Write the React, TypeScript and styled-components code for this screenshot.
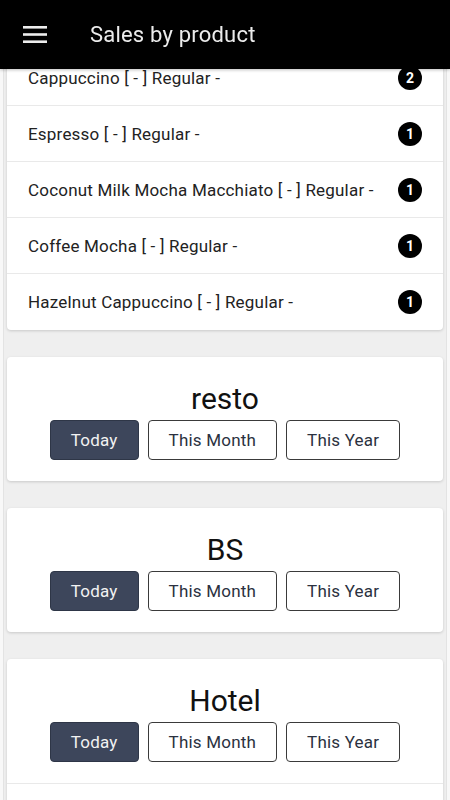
import React from "react";
import styled, { createGlobalStyle } from "styled-components";

const GlobalStyle = createGlobalStyle`
  html, body {
    margin: 0;
    padding: 0;
    background: #efefef;
  }
  body {
    font-family: Roboto, "Noto Sans", "Liberation Sans", sans-serif;
    -webkit-font-smoothing: antialiased;
  }
  * { box-sizing: border-box; }
`;

const Header = styled.header`
  position: fixed;
  top: 0;
  left: 0;
  right: 0;
  height: 69px;
  background: #000;
  display: flex;
  align-items: center;
  z-index: 10;
  box-shadow: 0 1px 3px rgba(0, 0, 0, 0.25);
`;

const MenuButton = styled.button`
  width: 70px;
  height: 69px;
  display: flex;
  align-items: center;
  justify-content: center;
  background: transparent;
  border: 0;
  padding: 0;
  margin-right: 20px;
  color: #ececec;
`;

const Title = styled.h1`
  margin: 0;
  font-size: 22px;
  font-weight: 400;
  color: #ececec;
  letter-spacing: 0.2px;
`;

const Main = styled.main`
  min-height: 800px;
  padding: 50px 7px 0;
  display: flex;
  flex-direction: column;
  gap: 27px;
  box-shadow: inset 3px 0 0 #f8f8f8, inset 4px 0 0 #e3e3e3,
    inset -3px 0 0 #f8f8f8, inset -4px 0 0 #e3e3e3;
`;

const Card = styled.section`
  background: #fff;
  border-radius: 4px;
  box-shadow: 0 1px 3px rgba(0, 0, 0, 0.16);
  overflow: hidden;
`;

const Row = styled.div`
  height: 56px;
  display: flex;
  align-items: center;
  justify-content: space-between;
  padding: 0 21px;
  border-bottom: 1px solid #e9e9e9;
  &:last-child {
    border-bottom: 0;
  }
`;

const ProductName = styled.span`
  font-size: 17px;
  letter-spacing: 0.2px;
  color: #222;
`;

const Badge = styled.span`
  width: 24px;
  height: 24px;
  border-radius: 50%;
  background: #000;
  color: #fff;
  font-size: 14px;
  font-weight: 700;
  display: flex;
  align-items: center;
  justify-content: center;
  flex-shrink: 0;
`;

const StoreHead = styled.div<{ $divided?: boolean }>`
  padding: 21px 0;
  display: flex;
  flex-direction: column;
  align-items: center;
  border-bottom: ${(p) => (p.$divided ? "1px solid #e9e9e9" : "0")};
`;

const StoreName = styled.h2`
  margin: 0;
  font-size: 30px;
  font-weight: 400;
  line-height: 42px;
  color: #111;
`;

const ButtonGroup = styled.div`
  display: flex;
  gap: 9px;
`;

const PeriodButton = styled.button<{ $active?: boolean }>`
  height: 40px;
  padding: 0 20px;
  border-radius: 4px;
  font-family: Roboto, "Noto Sans", "Liberation Sans", sans-serif;
  font-size: 17px;
  letter-spacing: 0.2px;
  border: 1px solid ${(p) => (p.$active ? "#2e3647" : "#3a3a3a")};
  background: ${(p) => (p.$active ? "#3d465b" : "#fff")};
  color: ${(p) => (p.$active ? "#f2f2f2" : "#2b3140")};
`;

const products = [
  { name: "Cappuccino [ - ] Regular -", count: 2 },
  { name: "Espresso [ - ] Regular -", count: 1 },
  { name: "Coconut Milk Mocha Macchiato [ - ] Regular -", count: 1 },
  { name: "Coffee Mocha [ - ] Regular -", count: 1 },
  { name: "Hazelnut Cappuccino [ - ] Regular -", count: 1 },
];

const MenuIcon = () => (
  <svg width="24" height="18" viewBox="0 0 24 18" fill="currentColor">
    <rect x="0" y="0" width="24" height="2.6" />
    <rect x="0" y="7.2" width="24" height="2.6" />
    <rect x="0" y="14.4" width="24" height="2.6" />
  </svg>
);

const StoreCard = ({ name, rows }: { name: string; rows?: { name: string; count: number }[] }) => (
  <Card>
    <StoreHead $divided={!!rows && rows.length > 0}>
      <StoreName>{name}</StoreName>
      <ButtonGroup>
        <PeriodButton $active>Today</PeriodButton>
        <PeriodButton>This Month</PeriodButton>
        <PeriodButton>This Year</PeriodButton>
      </ButtonGroup>
    </StoreHead>
    {rows?.map((r) => (
      <Row key={r.name}>
        <ProductName>{r.name}</ProductName>
        <Badge>{r.count}</Badge>
      </Row>
    ))}
  </Card>
);

export default function App() {
  return (
    <>
      <GlobalStyle />
      <Header>
        <MenuButton aria-label="menu">
          <MenuIcon />
        </MenuButton>
        <Title>Sales by product</Title>
      </Header>
      <Main>
        <Card>
          {products.map((p) => (
            <Row key={p.name}>
              <ProductName>{p.name}</ProductName>
              <Badge>{p.count}</Badge>
            </Row>
          ))}
        </Card>
        <StoreCard name="resto" />
        <StoreCard name="BS" />
        <StoreCard name="Hotel" rows={[{ name: "Cappuccino [ - ] Regular -", count: 1 }]} />
      </Main>
    </>
  );
}
